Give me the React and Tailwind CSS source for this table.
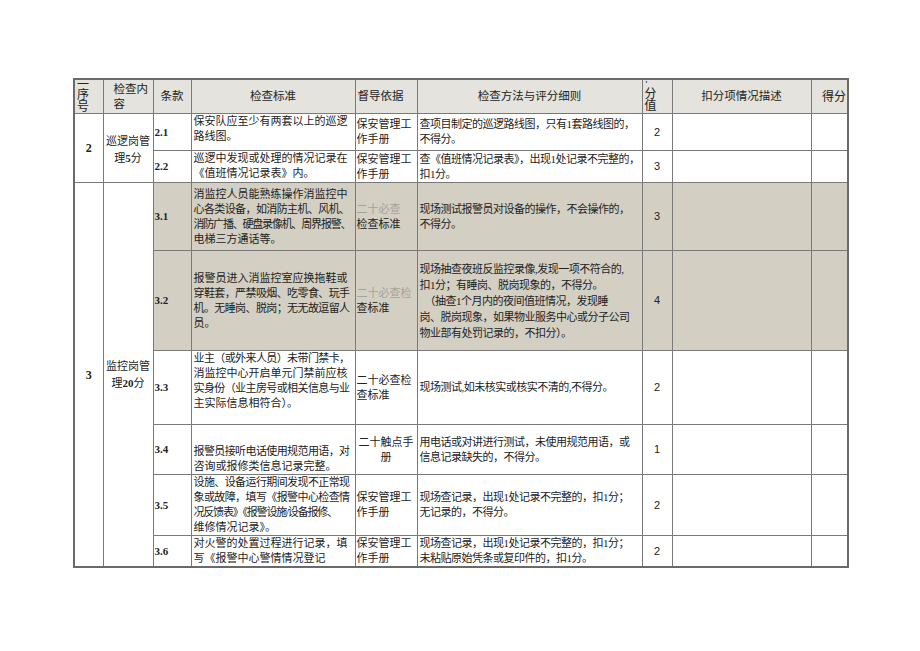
const serif = "font-['Liberation_Serif','Noto_Sans_CJK_SC',serif]";
const sans = "font-['Liberation_Sans','Noto_Sans_CJK_SC',sans-serif]";

const B = 'border border-[#7a7a7a]';
const faded = 'text-[#a5a298]';

const rows = [
    {
        code: '2.1', shaded: false, h: 'h-[37px]',
        std: ['保安队应至少有两套以上的巡逻', '路线图。'], stdAlign: 'align-top',
        basis: [['保安管理工'], ['作手册']],
        method: ['查项目制定的巡逻路线图，只有1套路线图的，', '不得分。'],
        score: '2',
    },
    {
        code: '2.2', shaded: false, h: 'h-[32px]',
        std: ['巡逻中发现或处理的情况记录在', '《值班情况记录表》内。'], stdAlign: 'align-top',
        basis: [['保安管理工'], ['作手册']],
        method: ['查《值班情况记录表》，出现1处记录不完整的，', '扣1分。'],
        score: '3',
    },
    {
        code: '3.1', shaded: true, h: 'h-[68px]',
        std: ['消监控人员能熟练操作消监控中', '心各类设备，如消防主机、风机、', '消防广播、硬盘录像机、周界报警、', '电梯三方通话等。'], stdAlign: 'align-middle',
        basis: [['二十必查', true], ['检查标准']],
        method: ['现场测试报警员对设备的操作，不会操作的，', '不得分。'],
        score: '3',
    },
    {
        code: '3.2', shaded: true, h: 'h-[100px]',
        std: ['报警员进入消监控室应换拖鞋或', '穿鞋套，严禁吸烟、吃零食、玩手', '机。无睡岗、脱岗；无无故逗留人', '员。'], stdAlign: 'align-middle',
        basis: [['二十必查检', true], ['查标准']],
        method: ['现场抽查夜班反监控录像,发现一项不符合的,', '扣1分；有睡岗、脱岗现象的，不得分。', '\u3000（抽查1个月内的夜间值班情况，发现睡', '岗、脱岗现象，如果物业服务中心或分子公司', '物业部有处罚记录的，不扣分）。'],
        loose: true,
        score: '4',
    },
    {
        code: '3.3', shaded: false, h: 'h-[74px]',
        std: ['业主（或外来人员）未带门禁卡，', '消监控中心开启单元门禁前应核', '实身份（业主房号或相关信息与业', '主实际信息相符合）。'], stdAlign: 'align-top',
        basis: [['二十必查检'], ['查标准']],
        method: ['现场测试,如未核实或核实不清的,不得分。'],
        score: '2',
    },
    {
        code: '3.4', shaded: false, h: 'h-[50px]',
        std: ['报警员接听电话使用规范用语，对', '咨询或报修类信息记录完整。'], stdAlign: 'align-bottom',
        basis: [['二十触点手'], ['册']], basisCenter: true,
        method: ['用电话或对讲进行测试，未使用规范用语，或', '信息记录缺失的，不得分。'],
        score: '1',
    },
    {
        code: '3.5', shaded: false, h: 'h-[61px]',
        std: ['设施、设备运行期间发现不正常现', '象或故障，填写《报警中心检查情', '况反馈表》《报警设施/设备报修、', '维修情况记录》。'], stdAlign: 'align-top',
        basis: [['保安管理工'], ['作手册']],
        method: ['现场查记录，出现1处记录不完整的，扣1分；', '无记录的，不得分。'],
        score: '2',
    },
    {
        code: '3.6', shaded: false, h: 'h-[31px]',
        std: ['对火警的处置过程进行记录，填', '写《报警中心警情情况登记'], stdAlign: 'align-top',
        basis: [['保安管理工'], ['作手册']],
        method: ['现场查记录，出现1处记录不完整的，扣1分；', '未粘贴原始凭条或复印件的，扣1分。'],
        score: '2',
    },
];

function tight(line) {
    if (line.length >= 16) return 'tracking-[-1.2px]';
    if (line.length === 15) return 'tracking-[-0.6px]';
    return '';
}

function Row({ r, first }) {
    const bg = r.shaded ? 'bg-[#d3d0c3]' : 'bg-white';
    return (
        <tr className={r.h}>
            {first && (
                <>
                    <td rowSpan={first.span} className={`${B} bg-white text-center align-middle font-bold text-[12px] ${serif}`}>
                        {first.num}
                    </td>
                    <td rowSpan={first.span} className={`${B} bg-white text-center align-middle text-[11px] leading-[17px] px-0 ${first.titlePad}`}>
                        {first.title}
                    </td>
                </>
            )}
            <td className={`${B} ${bg} align-middle pl-[1px] font-bold text-[11px] ${serif}`}>{r.code}</td>
            <td className={`${B} ${bg} ${r.stdAlign} px-[2px] text-[11px] leading-[15px] overflow-hidden`}>
                {r.std.map((l, i) => (
                    <div key={i} className={`whitespace-nowrap ${tight(l)}`}>{l}</div>
                ))}
            </td>
            <td className={`${B} ${bg} align-middle px-[1px] text-[11px] leading-[15px] ${r.basisCenter ? 'text-center' : ''}`}>
                {r.basis.map(([t, f], i) => (
                    <div key={i} className={`whitespace-nowrap ${f ? faded : ''}`}>{t}</div>
                ))}
            </td>
            <td className={`${B} ${bg} align-middle px-[2px] text-[11px] ${r.loose ? 'leading-[16px]' : 'leading-[15px]'} overflow-hidden`}>
                {r.method.map((l, i) => (
                    <div key={i} className="whitespace-nowrap tracking-[-0.5px]">{l}</div>
                ))}
            </td>
            <td className={`${B} ${bg} align-middle text-center text-[11px] ${sans}`}>{r.score}</td>
            <td className={`${B} ${bg}`}></td>
            <td className={`${B} ${bg}`}></td>
        </tr>
    );
}

export default function App() {
    return (
        <div className={`w-[920px] h-[651px] bg-white pt-[78px] pl-[73px] text-[#222] ${serif}`}>
            <table className="w-[774px] table-fixed border-collapse border-2 border-[#6a6a6a]">
                <colgroup>
                    <col className="w-[29px]" />
                    <col className="w-[50px]" />
                    <col className="w-[38px]" />
                    <col className="w-[164px]" />
                    <col className="w-[62px]" />
                    <col className="w-[225px]" />
                    <col className="w-[30px]" />
                    <col className="w-[139px]" />
                    <col className="w-[37px]" />
                </colgroup>
                <thead>
                    <tr className="h-[34px] bg-[#e4e3dd] text-[11.5px]">
                        <th className={`${B} p-0 align-top font-normal`}>
                            <div className={`h-[33px] overflow-hidden pl-[2px] pt-[2px] text-left leading-[12px] text-[12px] ${sans}`}>
                                <div className="h-[7px] leading-[7px] overflow-hidden">一</div>
                                <div>序</div>
                                <div>号</div>
                            </div>
                        </th>
                        <th className={`${B} font-normal text-left pl-[10px] leading-[15px] align-middle`}>
                            检查内<br />容
                        </th>
                        <th className={`${B} font-normal text-center`}>条款</th>
                        <th className={`${B} font-normal text-center`}>检查标准</th>
                        <th className={`${B} font-normal text-left pl-[2px]`}>督导依据</th>
                        <th className={`${B} font-normal text-center`}>检查方法与评分细则</th>
                        <th className={`${B} p-0 align-top font-normal`}>
                            <div className={`h-[33px] overflow-hidden pl-[2px] text-left leading-[12px] text-[12px] ${sans}`}>
                                <div className="text-[9px] h-[8px] leading-[8px] pl-[1px]">'</div>
                                <div>分</div>
                                <div>值</div>
                            </div>
                        </th>
                        <th className={`${B} font-normal text-center`}>扣分项情况描述</th>
                        <th className={`${B} font-normal text-right pr-[1px] text-[12px] ${sans}`}>得分</th>
                    </tr>
                </thead>
                <tbody>
                    {rows.map((r, i) => (
                        <Row
                            key={r.code}
                            r={r}
                            first={
                                i === 0
                                    ? { span: 2, num: '2', title: <>巡逻岗管<br />理<b className={serif}>5</b>分</>, titlePad: 'pt-[4px]' }
                                    : i === 2
                                    ? { span: 6, num: '3', title: <>监控岗管<br />理<b className={serif}>20</b>分</>, titlePad: '' }
                                    : null
                            }
                        />
                    ))}
                </tbody>
            </table>
        </div>
    );
}
